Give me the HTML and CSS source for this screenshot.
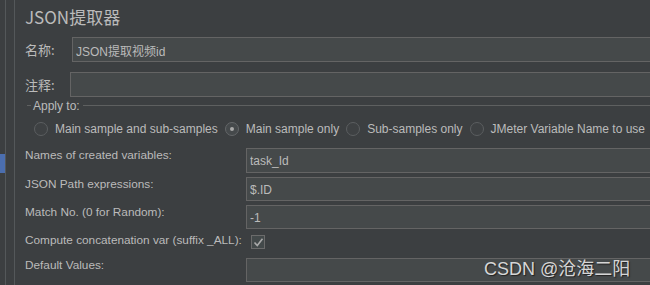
FILE: index.html
```html
<!DOCTYPE html>
<html lang="zh">
<head>
    <meta charset="UTF-8">
    <title>JSON提取器</title>
    <link rel="stylesheet" href="styles.css">
</head>
<body>

<div class="app">
    <div class="tree">
        <div class="tree-selected"></div>
    </div>
    <div class="tree-gap"></div>

    <div class="panel">
        <div class="title">JSON提取器</div>

        <div class="row">
            <label class="cn-label name-label">名称:</label>
            <input class="field" type="text" value="JSON提取视频id">
        </div>
        <div class="row comment-row">
            <label class="cn-label comment-label">注释:</label>
            <input class="field" type="text" value="">
        </div>

        <div class="group-head">
            <span class="dash"></span>
            <span class="group-title">Apply to:</span>
            <span class="rule"></span>
        </div>
        <div class="radios">
            <span class="radio"><i class="dot"></i>Main sample and sub-samples</span>
            <span class="radio checked"><i class="dot"></i>Main sample only</span>
            <span class="radio"><i class="dot"></i>Sub-samples only</span>
            <span class="radio"><i class="dot"></i>JMeter Variable Name to use</span>
        </div>

        <div class="form">
            <label class="form-label">Names of created variables:</label>
            <input class="field" type="text" value="task_Id">

            <label class="form-label">JSON Path expressions:</label>
            <input class="field" type="text" value="$.ID">

            <label class="form-label">Match No. (0 for Random):</label>
            <input class="field" type="text" value="-1">

            <label class="form-label">Compute concatenation var (suffix _ALL):</label>
            <span class="check">
                <svg width="11" height="11" viewBox="0 0 11 11"><path d="M1.5 5.5 L4.3 8.5 L9.5 1.8" fill="none" stroke="#a9a9a9" stroke-width="1.6"/></svg>
            </span>

            <label class="form-label">Default Values:</label>
            <input class="field" type="text" value="">
        </div>
    </div>
</div>

<div class="watermark">CSDN @沧海二阳</div>

</body>
</html>
```

FILE: styles.css
```css
body {
    margin: 0;
    background: #3c3f41;
    color: #bbbbbb;
    font-family: "Liberation Sans", "Noto Sans CJK SC", sans-serif;
    font-size: 12px;
    overflow: hidden;
}
.app {
    display: flex;
    height: 285px;
}
.tree {
    width: 5px;
    border-right: 1px solid #54585a;
}
.tree-selected {
    margin-top: 154px;
    height: 19px;
    background: #4b6eaf;
}
.tree-gap {
    width: 8px;
    border-right: 1px solid #54585a;
}
.panel {
    flex: 1;
    padding-left: 10px;
    min-width: 0;
}
.title {
    font-size: 17px;
    line-height: 33px;
    margin-bottom: 4px;
    font-family: "Noto Sans CJK SC", sans-serif;
}
.row {
    display: flex;
    align-items: center;
    height: 25px;
}
.comment-row {
    margin-top: 10px;
}
.cn-label {
    font-family: "Noto Sans CJK SC", sans-serif;
    font-size: 13px;
}
.name-label {
    width: 47px;
}
.comment-label {
    width: 45px;
}
.field {
    flex: 1;
    min-width: 0;
    height: 100%;
    box-sizing: border-box;
    margin: 0;
    padding: 1px 0 0 3px;
    background: #45494a;
    border: 1px solid #646464;
    border-right: none;
    color: #bbbbbb;
    font-family: "Liberation Sans", "Noto Sans CJK SC", sans-serif;
    font-size: 12px;
    outline: none;
}
.group-head {
    display: flex;
    align-items: center;
    height: 15px;
    margin-top: 1px;
    padding-left: 2px;
}
.dash {
    width: 4px;
    height: 1px;
    background: #5e6060;
}
.group-title {
    font-size: 12px;
    padding: 0 3px 0 2px;
}
.rule {
    flex: 1;
    height: 1px;
    background: #5e6060;
}
.radios {
    display: flex;
    align-items: center;
    height: 20px;
    margin-top: 6px;
    padding-left: 9px;
    font-size: 12px;
    white-space: nowrap;
}
.radio {
    display: flex;
    align-items: center;
    margin-right: 7px;
}
.dot {
    width: 12px;
    height: 12px;
    border: 1px solid #5b5e60;
    border-radius: 50%;
    background: #3e4143;
    margin-right: 7px;
    position: relative;
}
.checked .dot {
    background: #45494b;
    border-color: #646769;
}
.checked .dot::after {
    content: "";
    position: absolute;
    left: 4px;
    top: 4px;
    width: 4px;
    height: 4px;
    border-radius: 50%;
    background: #a9a9a9;
}
.form {
    display: grid;
    grid-template-columns: 221px 1fr;
    grid-template-rows: 25px 24px 24px 21px 24px;
    row-gap: 4px;
    margin-top: 9px;
}
.form-label {
    font-size: 11.8px;
    line-height: 15px;
    white-space: nowrap;
}
.check {
    width: 12px;
    height: 12px;
    margin: 2px 0 0 5px;
    border: 1px solid #6b6b6b;
    background: #43494a;
    display: flex;
    align-items: center;
    justify-content: center;
}
.watermark {
    position: absolute;
    left: 484px;
    top: 254px;
    font-family: "Liberation Sans", "Noto Sans CJK SC", sans-serif;
    font-size: 18px;
    color: #d6d6d6;
    text-shadow: 1px 1px 1px #222;
}
```
